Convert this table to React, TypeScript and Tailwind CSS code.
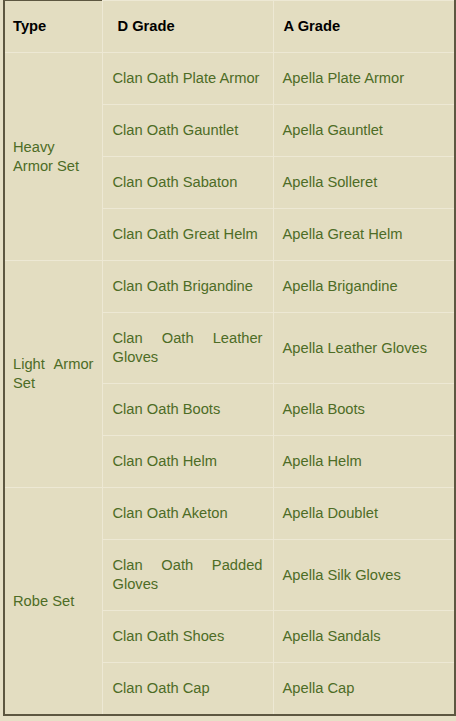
const rows = [
  {
    type: "Heavy Armor Set",
    items: [
      ["Clan Oath Plate Armor", "Apella Plate Armor"],
      ["Clan Oath Gauntlet", "Apella Gauntlet"],
      ["Clan Oath Sabaton", "Apella Solleret"],
      ["Clan Oath Great Helm", "Apella Great Helm"],
    ],
  },
  {
    type: "Light Armor Set",
    items: [
      ["Clan Oath Brigandine", "Apella Brigandine"],
      ["Clan Oath Leather Gloves", "Apella Leather Gloves"],
      ["Clan Oath Boots", "Apella Boots"],
      ["Clan Oath Helm", "Apella Helm"],
    ],
  },
  {
    type: "Robe Set",
    items: [
      ["Clan Oath Aketon", "Apella Doublet"],
      ["Clan Oath Padded Gloves", "Apella Silk Gloves"],
      ["Clan Oath Shoes", "Apella Sandals"],
      ["Clan Oath Cap", "Apella Cap"],
    ],
  },
];

const cell = "py-[16px] align-middle text-justify border border-[#ede8d4] text-[#4d6c26]";

export default function App() {
  return (
    <div className="min-h-screen bg-[#e6e0c6] pl-[3px] font-['Liberation_Sans',Arial,sans-serif] text-[14.7px] leading-[19px]">
      <table className="table-fixed border-collapse w-[451px] bg-[#e3ddc1] border-l-2 border-r-2 border-b-2 border-[#5d5741]">
        <colgroup>
          <col className="w-[98px]" />
          <col className="w-[171px]" />
          <col className="w-[182px]" />
        </colgroup>
        <thead>
          <tr>
            <th className="pl-[8px] pr-[8px] py-[16px] text-left font-bold text-black border border-[#ede8d4] border-t border-t-[#5d5741] border-l-2 border-l-[#5d5741]">
              Type
            </th>
            <th className="pl-[15px] pr-[10px] py-[16px] text-left font-bold text-black border border-[#ede8d4]">
              D Grade
            </th>
            <th className="pl-[10px] pr-[10px] py-[16px] text-left font-bold text-black border border-[#ede8d4] border-r-2 border-r-[#5d5741]">
              A Grade
            </th>
          </tr>
        </thead>
        <tbody>
          {rows.map((g) =>
            g.items.map((it, i) => (
              <tr key={g.type + i}>
                {i === 0 && (
                  <td
                    rowSpan={g.items.length}
                    className={cell + " pl-[8px] pr-[8px] border-l-2 border-l-[#5d5741]"}
                  >
                    {g.type}
                  </td>
                )}
                <td className={cell + " pl-[10px] pr-[10px]"}>{it[0]}</td>
                <td className={cell + " pl-[9px] pr-[10px] border-r-2 border-r-[#5d5741]"}>{it[1]}</td>
              </tr>
            ))
          )}
        </tbody>
      </table>
    </div>
  );
}
